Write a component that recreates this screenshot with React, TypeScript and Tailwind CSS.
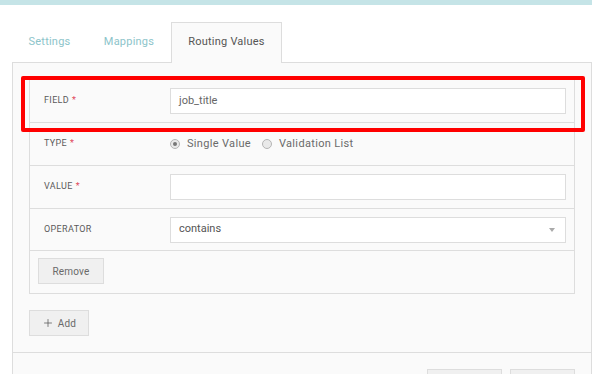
import { Plus } from "lucide-react";

const font = { fontFamily: "Roboto, 'Liberation Sans', sans-serif" };

function Label({ text, required }: { text: string; required?: boolean }) {
  return (
    <div className="w-[140px] pl-[14px] text-[9px] uppercase tracking-[0.04em] text-[#5a5a5a]">
      {text}
      {required && <span className="ml-[3px] text-[#e0485a]">*</span>}
    </div>
  );
}

function Radio({ checked, label }: { checked?: boolean; label: string }) {
  return (
    <label className="flex items-center gap-[7px]">
      <span className="flex h-[10px] w-[10px] items-center justify-center rounded-full border border-[#b5b5b5] bg-[#e9e9e9]">
        {checked && <span className="h-[4px] w-[4px] rounded-full bg-[#777]" />}
      </span>
      <span className="text-[11px] tracking-[0.03em] text-[#6a6a6a]">{label}</span>
    </label>
  );
}

export default function App() {
  return (
    <div className="h-[374px] w-[605px] overflow-hidden bg-white" style={font}>
      <div className="w-[592px]">
        <div className="h-[5px] bg-[#c5e4e7]" />

        <div className="mt-[17px] flex pl-[12px] text-[11px] tracking-[0.02em]">
          <div className="flex h-[40px] w-[75px] items-center justify-center text-[#8cc4ca]">Settings</div>
          <div className="flex h-[40px] w-[84px] items-center justify-center text-[#8cc4ca]">Mappings</div>
          <div className="relative z-10 -mb-px flex h-[41px] w-[111px] items-center justify-center border border-b-0 border-[#ddd] bg-[#fafafa] pb-px text-[#555]">
            Routing Values
          </div>
        </div>

        <div className="ml-[12px] border border-[#ddd] bg-[#fafafa]">
          <div className="px-[16px] pt-[16px] pb-[16px]">
            <div className="relative border border-[#ddd]">
              <div className="pointer-events-none absolute top-[-4px] left-[-9px] right-[-11px] h-[56px] rounded-[2px] border-[4px] border-[#ff0000]" />

              <div className="flex h-[43px] items-center border-b border-[#ddd] pr-[8px]">
                <Label text="Field" required />
                <div className="flex h-[26px] flex-1 items-center border border-[#ddd] bg-white px-[8px] text-[11px] text-[#666]">
                  job_title
                </div>
              </div>

              <div className="flex h-[43px] items-center border-b border-[#ddd] pr-[8px]">
                <Label text="Type" required />
                <div className="flex items-center gap-[11px]">
                  <Radio checked label="Single Value" />
                  <Radio label="Validation List" />
                </div>
              </div>

              <div className="flex h-[43px] items-center border-b border-[#ddd] pr-[8px]">
                <Label text="Value" required />
                <div className="h-[26px] flex-1 border border-[#ddd] bg-white" />
              </div>

              <div className="flex h-[42px] items-center border-b border-[#ddd] pr-[8px]">
                <Label text="Operator" />
                <div className="flex h-[26px] flex-1 items-center justify-between border border-[#ddd] bg-white pl-[8px] pr-[10px] text-[11px] text-[#555]">
                  contains
                  <span className="h-0 w-0 border-x-[3px] border-t-[4px] border-x-transparent border-t-[#aaa]" />
                </div>
              </div>

              <div className="flex h-[42px] items-start pt-[7px] pl-[8px]">
                <button className="h-[26px] w-[66px] border border-[#ddd] bg-[#f0f0f0] text-[10px] tracking-[0.02em] text-[#6a6a6a]">
                  Remove
                </button>
              </div>
            </div>

            <button className="mt-[16px] flex h-[26px] w-[60px] items-center justify-center gap-[4px] border border-[#ddd] bg-[#f0f0f0] text-[10px] tracking-[0.02em] text-[#6a6a6a]">
              <Plus size={12} strokeWidth={1.5} className="text-[#555]" />
              Add
            </button>
          </div>

          <div className="flex justify-end gap-[8px] border-t border-[#ddd] px-[16px] pt-[16px] pb-[16px]">
            <button className="h-[28px] w-[75px] border border-[#ddd] bg-[#f0f0f0]" aria-label="Cancel" />
            <button className="h-[28px] w-[65px] border border-[#ddd] bg-[#f0f0f0]" aria-label="Save" />
          </div>
        </div>
      </div>
    </div>
  );
}
